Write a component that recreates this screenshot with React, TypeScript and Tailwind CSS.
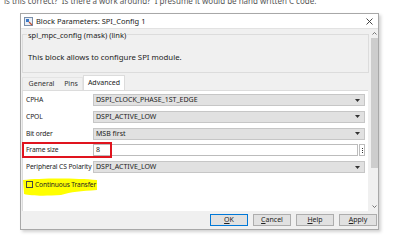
import React from "react";

const font = { fontFamily: '"Noto Sans", "Open Sans", sans-serif' };

function Dropdown({ value }: { value: string }) {
  return (
    <div className="flex-1 h-[12px] bg-[#e1e1e1] border border-[#c6c6c6] flex items-center pl-[2px] pr-[4px] text-[7px] text-[#222] leading-[10px]">
      <span className="flex-1 whitespace-nowrap overflow-hidden">{value}</span>
      <svg width="5" height="3" viewBox="0 0 5 3"><path d="M0 0H5L2.5 3Z" fill="#333" /></svg>
    </div>
  );
}

function Row({ label, children }: { label: string; children: React.ReactNode }) {
  return (
    <div className="flex items-center h-[12px]">
      <div className="w-[70px] pl-[3px] text-[6.7px] tracking-[-0.1px] text-[#222] leading-[10px] whitespace-nowrap">{label}</div>
      {children}
    </div>
  );
}

export default function App() {
  return (
    <div className="w-[400px] h-[242px] bg-white overflow-hidden relative" style={font}>
      <div className="h-[7px] overflow-hidden">
        <div className="mt-[-4px] pl-[4px] text-[8px] leading-[10px] text-[#555] whitespace-nowrap">
          is this correct?&nbsp; Is there a work around?&nbsp; I presume it would be hand written C code.
        </div>
      </div>
      <div className="mt-[6px] ml-[20px] w-[359px] h-[217px] border border-[#a8a8a8] shadow-[2px_2px_3px_rgba(0,0,0,0.18)] flex flex-col bg-white">
        {/* title bar */}
        <div className="h-[15px] flex items-center pl-[3px] pr-[5px] border-b border-[#e2e2e2]">
          <svg width="9" height="9" viewBox="0 0 9 9" className="mr-[3px]">
            <rect x="0.5" y="0.5" width="8" height="8" fill="#e8eef6" stroke="#7a8ea8" />
            <rect x="2" y="2" width="3" height="3" fill="#3a78c8" />
            <path d="M5 5 L8 8" stroke="#c05030" strokeWidth="1.2" />
          </svg>
          <span className="flex-1 text-[7.5px] text-[#222] leading-[10px]">Block Parameters: SPI_Config 1</span>
          <svg width="7" height="7" viewBox="0 0 7 7"><path d="M0.5 0.5L6.5 6.5M6.5 0.5L0.5 6.5" stroke="#333" strokeWidth="0.9" /></svg>
        </div>
        {/* body */}
        <div className="flex h-[182px]">
          <div className="flex-1 bg-[#f0f0f0] flex flex-col pl-[1px] pr-[1px]">
            {/* group box */}
            <div className="relative mt-[5px] h-[39px] border border-[#dcdcdc]">
              <span className="absolute left-[4px] top-[-5px] bg-[#f0f0f0] px-[1px] text-[7.5px] leading-[10px] text-[#222]">spi_mpc_config (mask) (link)</span>
              <div className="pt-[17px] pl-[5px] text-[7.8px] leading-[10px] text-[#222]">This block allows to configure SPI module.</div>
            </div>
            {/* tabs */}
            <div className="flex items-end h-[17px]">
              <div className="h-[13px] w-[38px] flex items-center justify-center text-[7px] text-[#333] leading-[10px] border-t border-l border-[#e4e4e4]">General</div>
              <div className="h-[13px] w-[23px] flex items-center justify-center text-[7px] text-[#333] leading-[10px] border-t border-r border-[#e4e4e4]">Pins</div>
              <div className="h-[15px] w-[42px] flex items-center justify-center text-[7px] text-[#222] leading-[10px] bg-white border border-b-0 border-[#dcdcdc]">Advanced</div>
            </div>
            {/* panel */}
            <div className="flex-1 bg-white border-l border-t border-[#dcdcdc] mr-[1px] pt-[3px] pr-[3px] flex flex-col gap-[4.75px]">
              <Row label="CPHA"><Dropdown value="DSPI_CLOCK_PHASE_1ST_EDGE" /></Row>
              <Row label="CPOL"><Dropdown value="DSPI_ACTIVE_LOW" /></Row>
              <Row label="Bit order"><Dropdown value="MSB first" /></Row>
              <div className="relative">
                <Row label="Frame size">
                  <div className="flex-1 flex items-center gap-[1px]">
                    <div className="flex-1 h-[12px] bg-white border border-[#bcbcbc] pl-[2px] text-[7px] leading-[10px] text-[#222]">8</div>
                    <div className="w-[6px] h-[12px] border border-[#bcbcbc] flex flex-col items-center justify-center gap-[1px]">
                      <div className="w-[1px] h-[1px] bg-[#333]" />
                      <div className="w-[1px] h-[1px] bg-[#333]" />
                      <div className="w-[1px] h-[1px] bg-[#333]" />
                    </div>
                  </div>
                </Row>
                <div className="absolute left-[-1px] top-[-2px] w-[90px] h-[16px] border-2 border-[#e0141e]" />
              </div>
              <Row label="Peripheral CS Polarity"><Dropdown value="DSPI_ACTIVE_LOW" /></Row>
              <div className="relative h-[14px] mt-[1px]">
                <svg className="absolute left-[-2px] top-[-2px]" width="78" height="20" viewBox="0 0 78 20">
                  <path d="M2 3 C20 1 55 1 76 3 L76 13 C60 14 50 15 40 18 C25 19 10 19 3 17 Z" fill="#ffff00" />
                </svg>
                <div className="relative flex items-center h-[12px] pl-[3px]">
                  <div className="w-[7px] h-[7px] border border-[#444] mr-[2px]" />
                  <span className="text-[6.6px] tracking-[-0.1px] leading-[10px] text-[#222]">Continuous Transfer</span>
                </div>
              </div>
            </div>
          </div>
          {/* scrollbar */}
          <div className="w-[8px] bg-[#f0f0f0] flex flex-col items-center">
            <div className="h-[9px] flex items-center justify-center">
              <svg width="5" height="3" viewBox="0 0 5 3"><path d="M0.5 2.5L2.5 0.5L4.5 2.5" stroke="#555" strokeWidth="0.8" fill="none" /></svg>
            </div>
            <div className="w-[7px] h-[130px] bg-[#cdcdcd]" />
            <div className="flex-1" />
            <div className="h-[9px] flex items-center justify-center">
              <svg width="5" height="3" viewBox="0 0 5 3"><path d="M0.5 0.5L2.5 2.5L4.5 0.5" stroke="#555" strokeWidth="0.8" fill="none" /></svg>
            </div>
          </div>
        </div>
        {/* button bar */}
        <div className="flex-1 bg-[#f0f0f0] flex items-center justify-end pr-[1px] gap-[5px]">
          {[
            ["O", "K", true],
            ["C", "ancel", false],
            ["H", "elp", false],
            ["A", "pply", false],
          ].map(([u, r, def]) => (
            <div
              key={String(u) + String(r)}
              className={
                def
                  ? "w-[38px] h-[12px] bg-[#e1e1e1] border border-[#0078d7] flex items-center justify-center text-[7px] leading-[10px] text-[#222]"
                  : "w-[38px] h-[12px] bg-[#e1e1e1] border border-[#adadad] flex items-center justify-center text-[7px] leading-[10px] text-[#222]"
              }
            >
              <span><span className="underline">{u as string}</span>{r as string}</span>
            </div>
          ))}
        </div>
      </div>
    </div>
  );
}
